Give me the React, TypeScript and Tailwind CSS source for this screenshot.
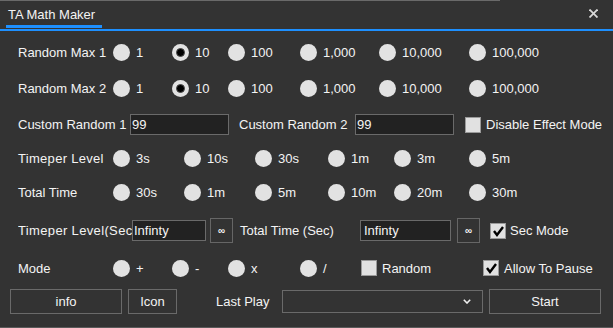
import React from "react";

const Radio = ({ checked, label, cls }: { checked?: boolean; label: string; cls: string }) => (
  <div className={`flex items-center shrink-0 ${cls}`}>
    <span className="w-[17px] h-[17px] rounded-full bg-[#e2e2e2] flex items-center justify-center shrink-0">
      {checked && <span className="w-[9px] h-[9px] rounded-full bg-black border border-[#4a4a4a]" />}
    </span>
    <span className="ml-[6px] whitespace-nowrap">{label}</span>
  </div>
);

const Check = ({ checked }: { checked?: boolean }) => (
  <span className="w-[16px] h-[16px] bg-[#e1e1e1] border border-[#9a9a9a] shrink-0 flex items-center justify-center">
    {checked && (
      <svg width="14" height="14" viewBox="0 0 14 14">
        <polyline points="3,7 6,11 12,3" fill="none" stroke="#000" strokeWidth="2.4" />
      </svg>
    )}
  </span>
);

const Box = ({ text, cls }: { text: string; cls: string }) => (
  <div className={`h-[21px] bg-[#222222] border border-[#6a6a6a] flex items-center shrink-0 whitespace-nowrap overflow-hidden ${cls}`}>
    {text}
  </div>
);

const Inf = () => (
  <div className="w-[23px] h-[25px] border border-[#666666] flex items-center justify-center shrink-0 text-[10px] font-bold">
    ∞
  </div>
);

export default function App() {
  return (
    <div className="w-[613px] h-[328px] bg-[#333333] text-[#f4f4f4] text-[13px] leading-none flex flex-col border-b border-[#5a5a5a] font-['Liberation_Sans',Arial,sans-serif] overflow-hidden">
      <div className="h-px flex">
        <div className="w-[500px] bg-[#6a6a6a]" />
      </div>
      <div className="h-[27px] flex justify-between items-start">
        <div className="ml-[6px] w-[96px] h-full flex flex-col">
          <div className="flex-1 flex items-center pl-[2px] pt-[2px] whitespace-nowrap">TA Math Maker</div>
          <div className="h-[3px] bg-[#1e90ff]" />
        </div>
        <div className="mt-[8px] mr-[15px]">
          <svg width="9" height="9" viewBox="0 0 9 9">
            <line x1="0.5" y1="0.5" x2="8.5" y2="8.5" stroke="#d8d8d8" strokeWidth="1.8" />
            <line x1="8.5" y1="0.5" x2="0.5" y2="8.5" stroke="#d8d8d8" strokeWidth="1.8" />
          </svg>
        </div>
      </div>
      <div className="h-px" />
      <div className="h-[2px] bg-[#1e90ff]" />

      {/* Row 1 */}
      <div className="mt-[11px] h-[20px] flex items-center pl-[18px]">
        <div className="w-[95px] whitespace-nowrap">Random Max 1</div>
        <Radio label="1" cls="w-[59px]" />
        <Radio label="10" checked cls="w-[56px]" />
        <Radio label="100" cls="w-[72px]" />
        <Radio label="1,000" cls="w-[79px]" />
        <Radio label="10,000" cls="w-[90px]" />
        <Radio label="100,000" cls="w-[90px]" />
      </div>

      {/* Row 2 */}
      <div className="mt-[16px] h-[20px] flex items-center pl-[18px]">
        <div className="w-[95px] whitespace-nowrap">Random Max 2</div>
        <Radio label="1" cls="w-[59px]" />
        <Radio label="10" checked cls="w-[56px]" />
        <Radio label="100" cls="w-[72px]" />
        <Radio label="1,000" cls="w-[79px]" />
        <Radio label="10,000" cls="w-[90px]" />
        <Radio label="100,000" cls="w-[90px]" />
      </div>

      {/* Row 3 */}
      <div className="mt-[16px] h-[21px] flex items-center pl-[18px]">
        <div className="w-[112px] whitespace-nowrap">Custom Random 1</div>
        <Box text="99" cls="w-[99px] pl-[1px]" />
        <div className="ml-[10px] w-[116px] whitespace-nowrap">Custom Random 2</div>
        <Box text="99" cls="w-[99px] pl-[1px]" />
        <div className="ml-[11px]">
          <Check />
        </div>
        <div className="ml-[5px] whitespace-nowrap">Disable Effect Mode</div>
      </div>

      {/* Row 4 */}
      <div className="mt-[13px] h-[20px] flex items-center pl-[18px]">
        <div className="w-[95px] whitespace-nowrap tracking-[0.3px]">Timeper Level</div>
        <Radio label="3s" cls="w-[71px]" />
        <Radio label="10s" cls="w-[71px]" />
        <Radio label="30s" cls="w-[73px]" />
        <Radio label="1m" cls="w-[66px]" />
        <Radio label="3m" cls="w-[75px]" />
        <Radio label="5m" cls="w-[75px]" />
      </div>

      {/* Row 5 */}
      <div className="mt-[14px] h-[20px] flex items-center pl-[18px]">
        <div className="w-[95px] whitespace-nowrap">Total Time</div>
        <Radio label="30s" cls="w-[71px]" />
        <Radio label="1m" cls="w-[71px]" />
        <Radio label="5m" cls="w-[73px]" />
        <Radio label="10m" cls="w-[66px]" />
        <Radio label="20m" cls="w-[75px]" />
        <Radio label="30m" cls="w-[75px]" />
      </div>

      {/* Row 6 */}
      <div className="mt-[16px] h-[25px] flex items-center pl-[18px]">
        <div className="w-[114px] whitespace-nowrap overflow-hidden tracking-[0.35px]">Timeper Level(Sec)</div>
        <Box text="Infinty" cls="w-[74px] pl-[1px]" />
        <div className="ml-[4px]">
          <Inf />
        </div>
        <div className="ml-[7px] w-[120px] whitespace-nowrap">Total Time (Sec)</div>
        <Box text="Infinty" cls="w-[91px] pl-[3px]" />
        <div className="ml-[6px]">
          <Inf />
        </div>
        <div className="ml-[10px]">
          <Check checked />
        </div>
        <div className="ml-[4px] whitespace-nowrap">Sec Mode</div>
      </div>

      {/* Row 7 */}
      <div className="mt-[15px] h-[20px] flex items-center pl-[18px]">
        <div className="w-[95px] whitespace-nowrap">Mode</div>
        <Radio label="+" cls="w-[59px]" />
        <Radio label="-" cls="w-[56px]" />
        <Radio label="x" cls="w-[72px]" />
        <Radio label="/" cls="w-[61px]" />
        <div className="w-[122px] flex items-center">
          <Check />
          <span className="ml-[5px]">Random</span>
        </div>
        <div className="flex items-center">
          <Check checked />
          <span className="ml-[5px] whitespace-nowrap">Allow To Pause</span>
        </div>
      </div>

      {/* Row 8 */}
      <div className="mt-[11px] h-[25px] flex items-center pl-[10px]">
        <div className="w-[112px] h-[25px] border border-[#6a6a6a] flex items-center justify-center">info</div>
        <div className="ml-[6px] w-[49px] h-[25px] border border-[#6a6a6a] flex items-center justify-center">Icon</div>
        <div className="ml-[39px] w-[66px] whitespace-nowrap">Last Play</div>
        <div className="w-[201px] h-[23px] border border-[#6a6a6a] flex items-center justify-end pr-[11px]">
          <svg width="8" height="5" viewBox="0 0 8 5">
            <polyline points="0.8,0.8 4,4 7.2,0.8" fill="none" stroke="#f0f0f0" strokeWidth="1.6" />
          </svg>
        </div>
        <div className="ml-[6px] w-[112px] h-[25px] border border-[#6a6a6a] flex items-center justify-center">Start</div>
      </div>
    </div>
  );
}
